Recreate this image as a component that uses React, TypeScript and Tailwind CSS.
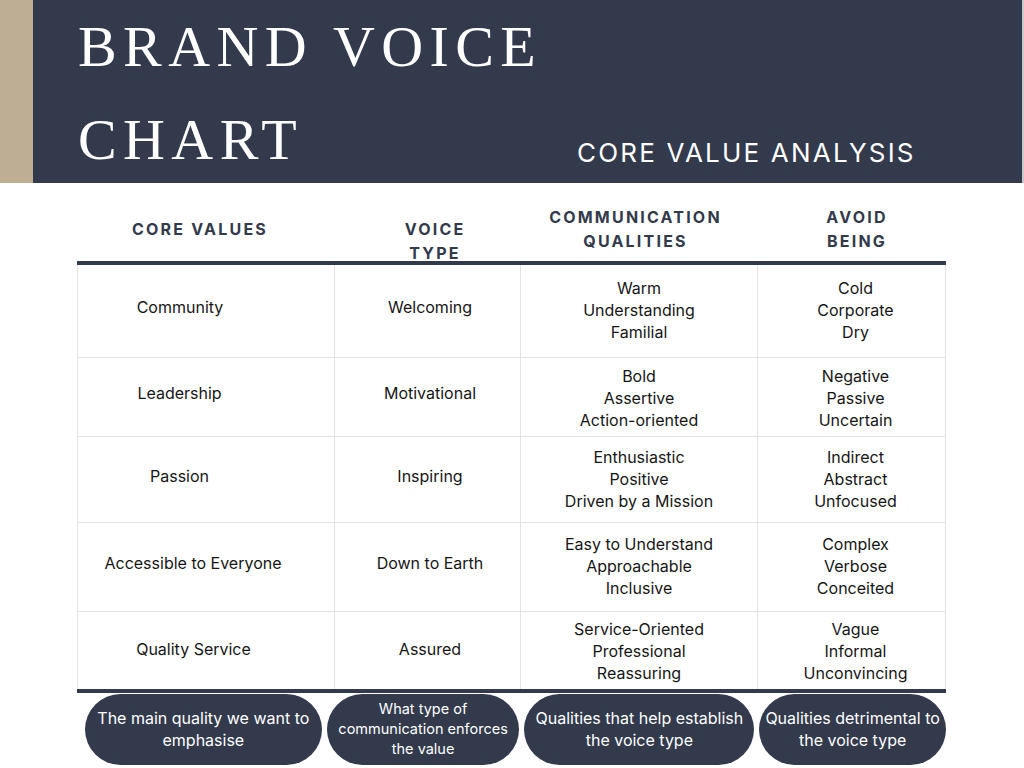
import React from "react";

const rows = [
  { h: "h-[93px]", m: "pb-[2px]", s: "pb-[8px]", a1: "pr-[52px]", a: "Community", b: "Welcoming", c: ["Warm", "Understanding", "Familial"], d: ["Cold", "Corporate", "Dry"] },
  { h: "h-[79px]", m: "pt-[2px]", s: "pb-[8px]", a1: "pr-[53px]", a: "Leadership", b: "Motivational", c: ["Bold", "Assertive", "Action-oriented"], d: ["Negative", "Passive", "Uncertain"] },
  { h: "h-[86px]", m: "pb-[2px]", s: "pb-[8px]", a1: "pr-[53px]", a: "Passion", b: "Inspiring", c: ["Enthusiastic", "Positive", "Driven by a Mission"], d: ["Indirect", "Abstract", "Unfocused"] },
  { h: "h-[89px]", m: "pb-[2px]", s: "pb-[8px]", a1: "pr-[26px]", a: "Accessible to Everyone", b: "Down to Earth", c: ["Easy to Understand", "Approachable", "Inclusive"], d: ["Complex", "Verbose", "Conceited"] },
  { h: "h-[77px]", m: "", s: "pb-[4px]", a1: "pr-[25px]", a: "Quality Service", b: "Assured", c: ["Service-Oriented", "Professional", "Reassuring"], d: ["Vague", "Informal", "Unconvincing"] },
];

const cols = "grid grid-cols-[258px_186px_237px_188px]";

export default function App() {
  return (
    <div className="w-[1024px] h-[768px] bg-white overflow-hidden font-['Inter','Liberation_Sans',sans-serif]">
      <header className="flex h-[183px]">
        <div className="w-[33px] bg-[#bdae94]" />
        <div className="flex flex-1 bg-[#323a4c] pl-[45px]">
          <h1 className="w-[499px] text-white font-['Liberation_Serif','DejaVu_Serif',serif] text-[58px] leading-[93px] tracking-[6.4px] font-normal">
            BRAND VOICE
            <br />
            CHART
          </h1>
          <div className="self-end pb-[14px] text-white text-[26px] leading-[32px] tracking-[2.2px]">
            CORE VALUE ANALYSIS
          </div>
        </div>
        <div className="w-[2px] bg-[#c9c9c9]" />
      </header>

      <div className="ml-[77px] w-[869px]">
        <div className={`${cols} h-[78px] text-[#323a4c] font-bold text-[16px] leading-[24px] tracking-[2.2px] text-center`}>
          <div className="pt-[34px] pr-[12px]">CORE VALUES</div>
          <div className="pt-[34px] pl-[14px]">VOICE<br />TYPE</div>
          <div className="pt-[22px] pr-[8px]">COMMUNICATION<br />QUALITIES</div>
          <div className="pt-[22px] pl-[10px]">AVOID<br />BEING</div>
        </div>
        <div className="relative border-t-4 border-b-4 border-[#323a4c]">
          {rows.map((r, i) => (
            <div
              key={i}
              className={`${cols} ${r.h} ${i < rows.length - 1 ? "border-b border-b-[#e3e3e3]" : ""} text-[16px] leading-[22px] text-[#161616] text-center`}
            >
              <div className={`flex items-center justify-center border-l border-r border-[#e3e3e3] ${r.a1} ${r.s}`}>{r.a}</div>
              <div className={`flex items-center justify-center border-r border-[#e3e3e3] pl-[5px] ${r.s}`}>{r.b}</div>
              <div className={`flex flex-col items-center justify-center border-r border-[#e3e3e3] ${r.m}`}>
                {r.c.map((t) => (
                  <span key={t}>{t}</span>
                ))}
              </div>
              <div className={`flex flex-col items-center justify-center border-r border-[#e3e3e3] pl-[8px] ${r.m}`}>
                {r.d.map((t) => (
                  <span key={t}>{t}</span>
                ))}
              </div>
            </div>
          ))}
        </div>
        <div className="flex gap-[5px] pl-[8px] pt-[1px] text-white text-center">
          <div className="w-[237px] h-[71px] rounded-full bg-[#323a4c] flex items-center justify-center text-[16px] leading-[22px] px-[2px] pb-[2px]">
            The main quality we want to<br />emphasise
          </div>
          <div className="w-[193px] h-[71px] rounded-full bg-[#323a4c] flex items-center justify-center text-[14.5px] leading-[20px] px-[2px] pb-[2px]">
            What type of<br />communication enforces<br />the value
          </div>
          <div className="w-[230px] h-[71px] rounded-full bg-[#323a4c] flex items-center justify-center text-[16px] leading-[22px] px-[2px] pb-[2px]">
            Qualities that help establish<br />the voice type
          </div>
          <div className="w-[187px] h-[71px] rounded-full bg-[#323a4c] flex items-center justify-center text-[16px] leading-[22px] px-[1px] pb-[2px]">
            Qualities detrimental to<br />the voice type
          </div>
        </div>
      </div>
    </div>
  );
}
